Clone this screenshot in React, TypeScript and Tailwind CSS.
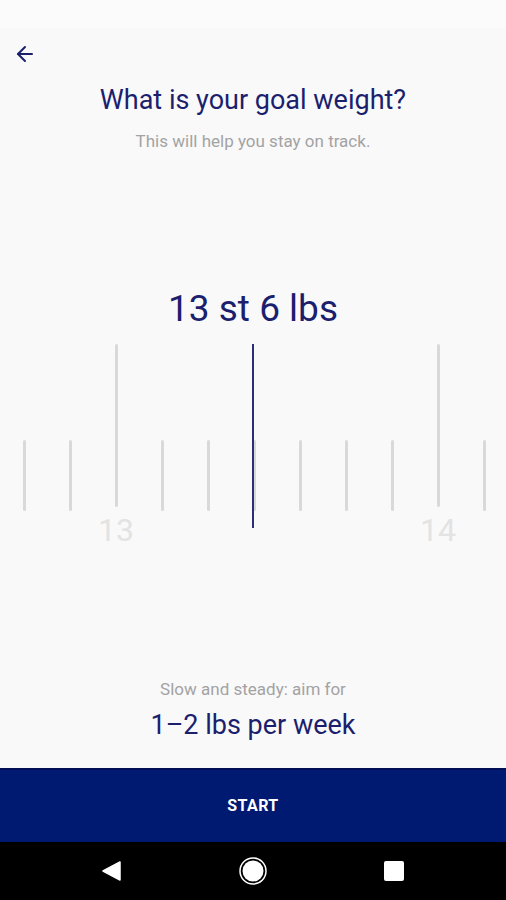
import { ArrowLeft } from "lucide-react";

const TICKS = [
  { major: false },
  { major: false },
  { major: true, label: "13" },
  { major: false },
  { major: false },
  { major: false },
  { major: false },
  { major: false },
  { major: false },
  { major: true, label: "14" },
  { major: false },
];

function Ruler() {
  return (
    <div className="relative h-[200px] w-full">
      <div className="grid grid-cols-[repeat(11,46px)] pl-[1px]">
        {TICKS.map((t, i) => (
          <div key={i} className="flex h-[200px] flex-col items-center">
            <div className="flex h-[167px] items-end">
              <div className={`w-[3px] rounded-full bg-[#d9d9d9] ${t.major ? "h-[163px]" : "h-[71px]"}`} />
            </div>
            {t.label && (
              <span className="mt-[5px] text-[32px] leading-[36px] text-[#e3e3e3]">{t.label}</span>
            )}
          </div>
        ))}
      </div>
      {/* selected value indicator */}
      <div className="absolute left-[252px] top-0 h-[184px] w-[2px] bg-[#2a2f78]" />
    </div>
  );
}

export default function App() {
  return (
    <div className="flex h-[900px] w-[506px] flex-col bg-[#f9f9fa] font-['Roboto',sans-serif]">
      {/* status bar */}
      <div className="h-[28px] bg-[#fbfbfb]" />

      <div className="flex flex-1 flex-col">
        <div className="px-[13px] pt-[14px]">
          <ArrowLeft size={24} strokeWidth={2} className="text-[#1b1f6e]" />
        </div>

        <h1 className="mt-[17px] text-center text-[27px] leading-[34px] text-[#1b1f6e]">
          What is your goal weight?
        </h1>
        <p className="mt-[13px] text-center text-[17px] leading-[22px] text-[#a3a3a3]">
          This will help you stay on track.
        </p>

        <div className="mt-[135px] text-center text-[37px] leading-[44px] text-[#1b1f6e]">
          13 st 6 lbs
        </div>

        <div className="mt-[13px]">
          <Ruler />
        </div>

        <div className="mt-auto pb-[26px] text-center">
          <p className="text-[17px] leading-[22px] text-[#a3a3a3]">Slow and steady: aim for</p>
          <p className="mt-[8px] text-[27px] leading-[34px] text-[#1b1f6e]">1–2 lbs per week</p>
        </div>
      </div>

      <button className="flex h-[74px] items-center justify-center border-t-2 border-[#000f55] bg-[#001a72] text-[16px] font-bold tracking-wide text-white">
        START
      </button>

      {/* android nav bar */}
      <div className="flex h-[58px] items-center bg-black">
        <div className="flex w-full items-center justify-between px-[102px]">
          <svg width="19" height="20" viewBox="0 0 19 20">
            <path d="M18 1 L1 10 L18 19 Z" fill="white" stroke="white" strokeWidth="1.5" strokeLinejoin="round" />
          </svg>
          <svg width="30" height="30" viewBox="0 0 30 30">
            <circle cx="15" cy="15" r="13" fill="none" stroke="white" strokeWidth="1.5" />
            <circle cx="15" cy="15" r="10.5" fill="white" />
          </svg>
          <div className="h-[20px] w-[20px] rounded-[2px] bg-white" />
        </div>
      </div>
    </div>
  );
}
